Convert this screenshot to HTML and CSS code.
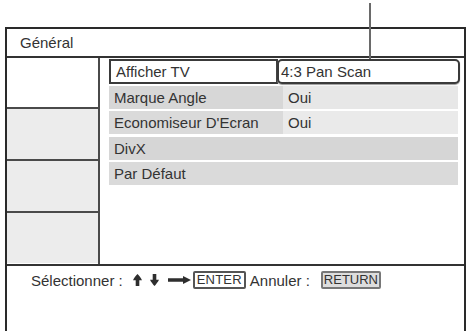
FILE: index.html
```html
<!DOCTYPE html>
<html lang="fr">
<head>
<meta charset="utf-8">
<title>Général</title>
<link rel="stylesheet" href="styles.css">
</head>
<body>
<div class="callout"></div>
<div class="frame">
  <div class="header">Général</div>
  <div class="main">
    <div class="side">
      <div class="cell white"></div>
      <div class="cell"></div>
      <div class="cell"></div>
      <div class="cell"></div>
    </div>
    <div class="rows">
      <div class="row selected">
        <div class="label">Afficher TV</div>
        <div class="value">4:3 Pan Scan</div>
      </div>
      <div class="row pair">
        <div class="label">Marque Angle</div>
        <div class="value">Oui</div>
      </div>
      <div class="row pair">
        <div class="label">Economiseur D'Ecran</div>
        <div class="value">Oui</div>
      </div>
      <div class="row full">
        <div class="label">DivX</div>
      </div>
      <div class="row full">
        <div class="label">Par Défaut</div>
      </div>
    </div>
  </div>
  <div class="footer">
    <span class="txt">Sélectionner :</span>
    <svg class="arr first" width="9" height="12" viewBox="0 0 9 12"><path d="M4.5 0 C6 1.5 8 4 9 6.2 L6.3 6.2 L6.3 12 L2.7 12 L2.7 6.2 L0 6.2 C1 4 3 1.5 4.5 0 Z" fill="#2e2e2e"/></svg>
    <svg class="arr" width="9" height="12" viewBox="0 0 9 12"><path d="M4.5 12 C6 10.5 8 8 9 5.8 L6.3 5.8 L6.3 0 L2.7 0 L2.7 5.8 L0 5.8 C1 8 3 10.5 4.5 12 Z" fill="#2e2e2e"/></svg>
    <svg class="arr right" width="23" height="8" viewBox="0 0 23 8"><path d="M0 2.3 H15 V0 L23 4 L15 8 V5.7 H0 Z" fill="#2e2e2e"/></svg>
    <span class="key">ENTER</span>
    <span class="txt">Annuler :</span>
    <span class="key gray">RETURN</span>
  </div>
</div>
</body>
</html>
```
FILE: styles.css
```css
html, body {
  margin: 0;
  padding: 0;
  background: #fff;
}
body {
  font-family: "Liberation Sans", Arial, sans-serif;
  color: #333;
  width: 470px;
  height: 331px;
  overflow: hidden;
  position: relative;
}
.callout {
  position: absolute;
  left: 369px;
  top: 3px;
  width: 2px;
  height: 56px;
  background: #6a6a6a;
  z-index: 2;
}
.frame {
  margin: 27px 0 0 5px;
  width: 457px;
  height: 304px;
  border: 2px solid #2a2a2a;
  border-bottom: none;
  display: flex;
  flex-direction: column;
}
.header {
  height: 27px;
  border-bottom: 2px solid #333;
  font-size: 15px;
  line-height: 27px;
  padding-left: 13px;
}
.main {
  display: flex;
  height: 206px;
  border-bottom: 2px solid #333;
}
.side {
  width: 91px;
  border-right: 2px solid #4a4a4a;
  display: flex;
  flex-direction: column;
}
.cell {
  height: 50px;
  background: #ececec;
  border-top: 2px solid #4a4a4a;
}
.cell.white {
  background: #fff;
  border-top: none;
  height: 49px;
}
.rows {
  flex: 1;
  padding: 1px 6px 0 9px;
  display: flex;
  flex-direction: column;
  gap: 2px;
}
.row {
  display: flex;
  height: 23px;
  font-size: 15px;
  line-height: 23px;
}
.row .label {
  width: 169px;
  padding-left: 5px;
  white-space: nowrap;
}
.row .value {
  flex: 1;
  padding-left: 5px;
}
.row.selected {
  height: 25px;
  line-height: 21px;
}
.row.selected .label {
  width: 160px;
  border: 2px solid #3a3a3a;
  background: #fff;
}
.row.selected .value {
  border: 2px solid #3a3a3a;
  border-radius: 5px;
  background: #fff;
  box-shadow: 0 1px 1px #999;
  padding-left: 2px;
  margin-left: -1px;
  margin-right: -2px;
}
.row.pair .label { background: #d7d7d7; }
.row.pair .value { background: #e7e7e7; }
.row.pair + .row.pair .label { background: #dadada; }
.row.pair + .row.pair .value { background: #eaeaea; }
.row.full { background: #d6d6d6; margin-top: 1px; }
.row.full + .row.full { background: #dadada; margin-top: 0; }
.footer {
  display: flex;
  align-items: center;
  padding: 4px 0 0 24px;
  height: 20px;
  font-size: 15px;
}
.txt { white-space: nowrap; }
.arr { margin-left: 8px; }
.arr.first { margin-left: 10px; }
.arr.right { margin-left: 9px; }
.key {
  margin-left: 2px;
  border: 2px solid #555;
  border-radius: 2px;
  font-size: 13px;
  line-height: 14px;
  padding: 0 2px;
  letter-spacing: 0.2px;
}
.key + .txt { margin-left: 4px; }
.key.gray {
  background: #ddd;
  border-color: #777;
  margin-left: 11px;
  padding: 0 1px;
  letter-spacing: 0;
}
```
